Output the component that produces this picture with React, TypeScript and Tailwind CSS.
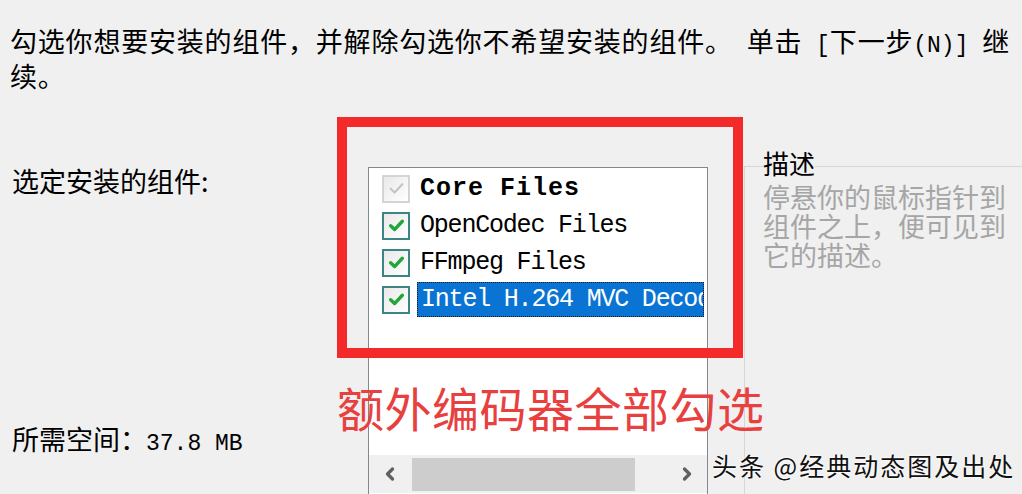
import { ChevronLeft, ChevronRight } from 'lucide-react';

const cjk = "font-['Noto_Sans_CJK_SC','Noto_Sans',sans-serif]";
const mono = "font-['Liberation_Mono','Noto_Sans_CJK_SC',monospace]";

interface Component {
  name: string;
  locked?: boolean;
  bold?: boolean;
  selected?: boolean;
}

const components: Component[] = [
  { name: 'Core Files', locked: true, bold: true },
  { name: 'OpenCodec Files' },
  { name: 'FFmpeg Files' },
  { name: 'Intel H.264 MVC Decoder', selected: true },
];

const CheckBox = ({ locked }: { locked?: boolean }) => (
  <div
    className={`w-[28px] h-[28px] shrink-0 border-2 flex items-center justify-center bg-gradient-to-br from-[#e9e9e9] to-white ${
      locked ? 'border-[#d4d4d4]' : 'border-[#3b8585]'
    }`}
  >
    <svg viewBox="0 0 16 16" className="w-[17px] h-[17px]">
      <path
        d="M2.5 8.2 L6.2 11.8 L13.5 4"
        fill="none"
        stroke={locked ? '#c4c4c4' : '#22a63a'}
        strokeWidth={locked ? 2 : 3.2}
        strokeLinecap="round"
        strokeLinejoin="round"
      />
    </svg>
  </div>
);

export default function App() {
  return (
    <div className={`relative w-[1022px] h-[494px] overflow-hidden bg-[#f0f0f0] text-black ${cjk}`}>
      {/* Header */}
      <p className="h-[86px] pl-[10px] pt-[26px] text-[27px] leading-[30px] tracking-[0.8px] whitespace-nowrap">
        勾选你想要安装的组件，并解除勾选你不希望安装的组件。
        <span className={`${mono} text-[23px] tracking-normal`}> </span>
        单击
        <span className={`${mono} text-[23px] tracking-normal`}> [</span>
        下一步
        <span className={`${mono} text-[23px] tracking-normal`}>(N)] </span>
        继
        <br />
        续。
      </p>

      {/* Body */}
      <div className="flex h-[344px] mt-[64px]">
        {/* Labels */}
        <div className="w-[368px] shrink-0 pl-[12px] flex flex-col">
          <div className="mt-[16px] text-[27px] leading-[29px]">选定安装的组件:</div>
          <div className="mt-[229px] text-[27px] leading-[29px] flex items-baseline">
            所需空间：
            <span className={`${mono} text-[23px] -ml-[1px]`}>37.8 MB</span>
          </div>
        </div>

        {/* Component list */}
        <div className="mt-[17px] w-[340px] h-[340px] shrink-0 border border-[#828790] bg-white flex flex-col overflow-hidden">
          <div className="h-[287px] pt-[2px]">
            {components.map(c => (
              <div key={c.name} className="h-[37px] flex items-center pl-[13px]">
                <CheckBox locked={c.locked} />
                <div
                  className={`ml-[7px] mr-[3px] h-[35px] flex-1 min-w-0 flex items-center pl-[3px] overflow-hidden whitespace-nowrap ${mono} ${
                    c.selected
                      ? 'bg-[#0a74d4] text-white border border-dotted border-[#1a1a1a]'
                      : ''
                  } ${c.bold ? 'font-bold text-[25px] tracking-[1px]' : 'text-[25px] tracking-[-1.2px]'}`}
                >
                  {c.name}
                </div>
              </div>
            ))}
          </div>

          {/* Horizontal scrollbar */}
          <div className="h-[38px] bg-[#f0f0f0] flex items-center">
            <div className="w-[42px] h-full flex items-center justify-center">
              <ChevronLeft className="w-[20px] h-[20px] text-[#606060]" strokeWidth={4} />
            </div>
            <div className="ml-[1px] w-[223px] h-[33px] bg-[#cdcdcd]" />
            <div className="flex-1" />
            <div className="w-[40px] h-full flex items-center justify-center">
              <ChevronRight className="w-[20px] h-[20px] text-[#606060]" strokeWidth={4} />
            </div>
          </div>
        </div>

        {/* Description group */}
        <div className="mt-[16px] ml-[36px] flex-1 border-l border-t border-[#d6d6d6] flex flex-col">
          <div className="-mt-[19px] ml-[18px] w-fit bg-[#f0f0f0] text-[26px] leading-[29px]">描述</div>
          <p className="mt-[5px] ml-[18px] text-[27px] leading-[29px] text-[#a6a6a6]">
            停悬你的鼠标指针到
            <br />
            组件之上，便可见到
            <br />
            它的描述。
          </p>
        </div>
      </div>

      {/* Annotations */}
      <div className="absolute left-[337px] top-[117px] w-[406px] h-[241px] border-[10px] border-[#f42a2a]" />
      <div className="absolute left-[337px] top-[383px] text-[47px] leading-none tracking-[0.5px] text-[#e8403f]">
        额外编码器全部勾选
      </div>
      <div className="absolute left-[712px] top-[453px] text-[25px] leading-none tracking-[2px] text-[#111] [text-shadow:0_0_3px_white,0_0_2px_white]">
        头条 @经典动态图及出处
      </div>
    </div>
  );
}
